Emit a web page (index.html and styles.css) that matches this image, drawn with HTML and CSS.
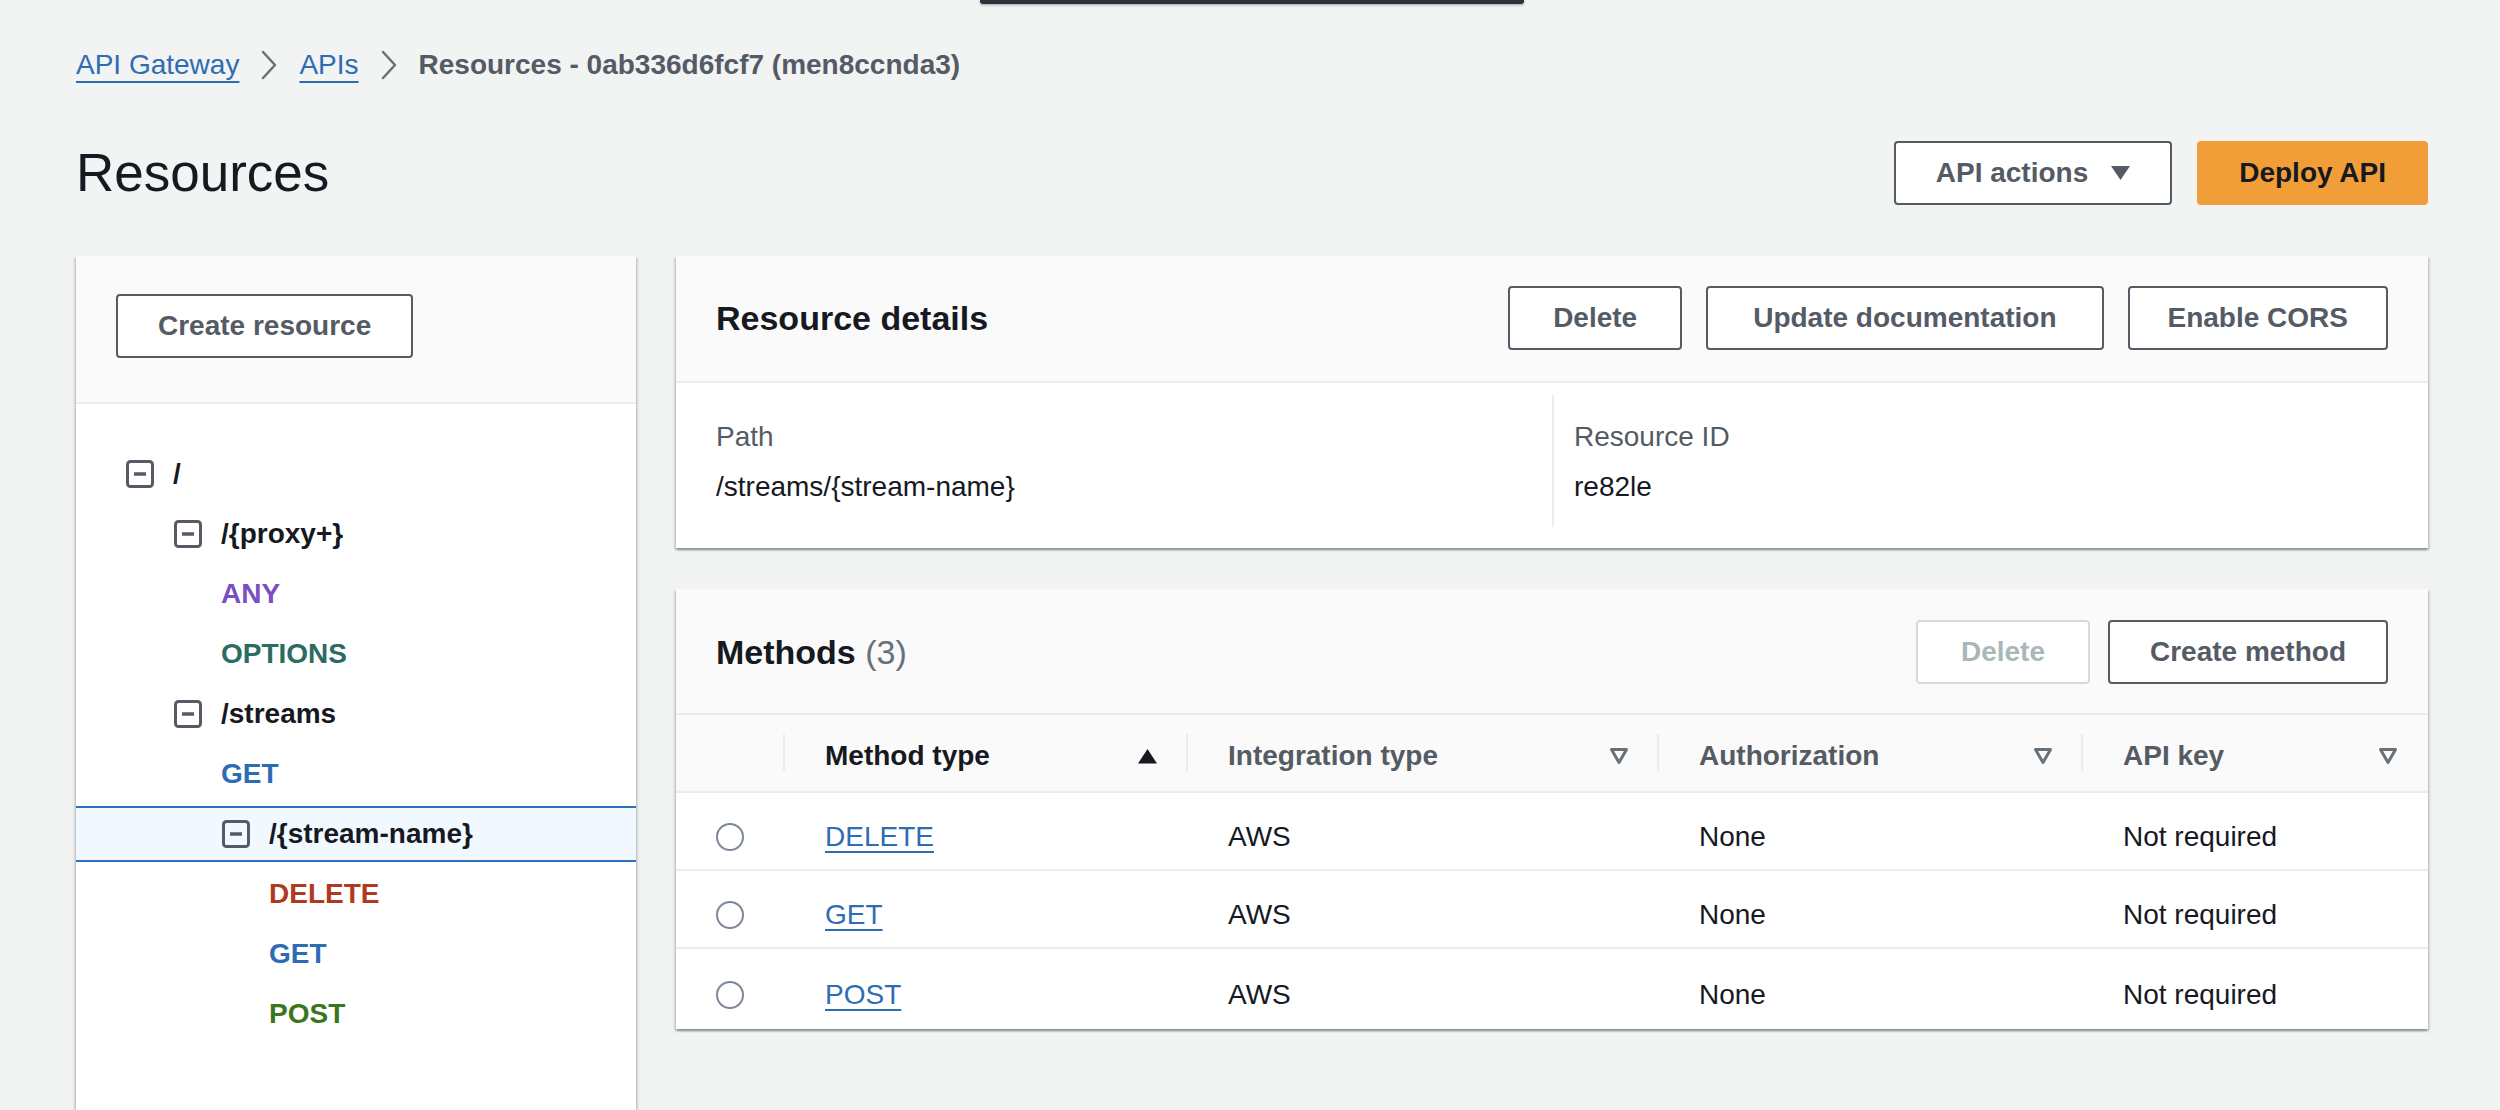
FILE: index.html
```html
<!DOCTYPE html>
<html lang="en">
<head>
<meta charset="utf-8">
<title>Resources - API Gateway</title>
<link rel="stylesheet" href="styles.css">
</head>
<body>
<div class="notch"></div>
<main class="page">
  <nav class="breadcrumb">
    <a class="crumb-link" href="#">API Gateway</a>
    <svg class="chev" viewBox="0 0 16 30"><path d="M2 2 L14 15 L2 28"/></svg>
    <a class="crumb-link" href="#">APIs</a>
    <svg class="chev" viewBox="0 0 16 30"><path d="M2 2 L14 15 L2 28"/></svg>
    <span class="crumb-current">Resources - 0ab336d6fcf7 (men8ccnda3)</span>
  </nav>

  <header class="page-header">
    <h1>Resources</h1>
    <div class="actions">
      <button class="btn">API actions <svg class="caret" viewBox="0 0 19 14"><polygon points="0,0 19,0 9.5,14"/></svg></button>
      <button class="btn btn-primary">Deploy API</button>
    </div>
  </header>

  <div class="layout">
    <aside class="panel">
      <div class="panel-header">
        <button class="btn">Create resource</button>
      </div>
      <ul class="tree">
        <li class="row r0"><svg class="tog" viewBox="0 0 28 28"><rect x="1.5" y="1.5" width="25" height="25" rx="3"/><line x1="8" y1="14" x2="20" y2="14"/></svg><span class="res">/</span></li>
        <li class="row r1"><svg class="tog" viewBox="0 0 28 28"><rect x="1.5" y="1.5" width="25" height="25" rx="3"/><line x1="8" y1="14" x2="20" y2="14"/></svg><span class="res">/{proxy+}</span></li>
        <li class="row m1"><span class="meth any">ANY</span></li>
        <li class="row m1"><span class="meth options">OPTIONS</span></li>
        <li class="row r1"><svg class="tog" viewBox="0 0 28 28"><rect x="1.5" y="1.5" width="25" height="25" rx="3"/><line x1="8" y1="14" x2="20" y2="14"/></svg><span class="res">/streams</span></li>
        <li class="row m1"><span class="meth get">GET</span></li>
        <li class="row r2 selected"><svg class="tog" viewBox="0 0 28 28"><rect x="1.5" y="1.5" width="25" height="25" rx="3"/><line x1="8" y1="14" x2="20" y2="14"/></svg><span class="res">/{stream-name}</span></li>
        <li class="row m2"><span class="meth delete">DELETE</span></li>
        <li class="row m2"><span class="meth get">GET</span></li>
        <li class="row m2"><span class="meth post">POST</span></li>
      </ul>
    </aside>

    <section class="content">
      <div class="card">
        <div class="card-header">
          <h2>Resource details</h2>
          <div class="btn-group">
            <button class="btn btn-wide-s">Delete</button>
            <button class="btn btn-wide-l">Update documentation</button>
            <button class="btn btn-tight">Enable CORS</button>
          </div>
        </div>
        <div class="details">
          <div class="col">
            <div class="label">Path</div>
            <div class="value">/streams/{stream-name}</div>
          </div>
          <div class="col col-border">
            <div class="label">Resource ID</div>
            <div class="value">re82le</div>
          </div>
        </div>
      </div>

      <div class="card">
        <div class="card-header methods-header">
          <h2>Methods <span class="count">(3)</span></h2>
          <div class="btn-group narrow">
            <button class="btn btn-disabled btn-wide-s">Delete</button>
            <button class="btn">Create method</button>
          </div>
        </div>
        <table class="methods">
          <colgroup>
            <col class="c0"><col class="c1"><col class="c2"><col class="c3"><col class="c4">
          </colgroup>
          <thead>
            <tr>
              <th class="sel-col"></th>
              <th class="sorted"><div class="th-inner"><span>Method type</span><svg class="sort" viewBox="0 0 21 16"><polygon points="10.5,1 20,15.5 1,15.5"/></svg></div></th>
              <th><div class="th-inner"><span>Integration type</span><svg class="filt" viewBox="0 0 20 18"><polygon points="2.5,2.5 17.5,2.5 10,15.5"/></svg></div></th>
              <th><div class="th-inner"><span>Authorization</span><svg class="filt" viewBox="0 0 20 18"><polygon points="2.5,2.5 17.5,2.5 10,15.5"/></svg></div></th>
              <th class="last"><div class="th-inner"><span>API key</span><svg class="filt" viewBox="0 0 20 18"><polygon points="2.5,2.5 17.5,2.5 10,15.5"/></svg></div></th>
            </tr>
          </thead>
          <tbody>
            <tr>
              <td class="sel-col"><span class="radio"></span></td>
              <td><a class="link" href="#">DELETE</a></td>
              <td>AWS</td>
              <td>None</td>
              <td>Not required</td>
            </tr>
            <tr>
              <td class="sel-col"><span class="radio"></span></td>
              <td><a class="link" href="#">GET</a></td>
              <td>AWS</td>
              <td>None</td>
              <td>Not required</td>
            </tr>
            <tr>
              <td class="sel-col"><span class="radio"></span></td>
              <td><a class="link" href="#">POST</a></td>
              <td>AWS</td>
              <td>None</td>
              <td>Not required</td>
            </tr>
          </tbody>
        </table>
      </div>
    </section>
  </div>
</main>
</body>
</html>
```

FILE: styles.css
```css
* { box-sizing: border-box; }

html, body {
  margin: 0;
  padding: 0;
}

body {
  position: relative;
  height: 1110px;
  overflow: hidden;
  background: #f2f3f3;
  color: #16191f;
  font-family: "Liberation Sans", Arial, sans-serif;
  font-size: 28px;
  line-height: 40px;
}

.notch {
  position: absolute;
  left: 980px;
  top: 0;
  width: 544px;
  height: 4px;
  background: #2b3139;
  border-radius: 0 0 3px 3px;
  box-shadow: 0 1px 3px rgba(0, 0, 0, 0.35);
}

.page {
  padding: 45px 72px 0 76px;
}

/* Breadcrumb */
.breadcrumb {
  display: flex;
  align-items: center;
  gap: 22px;
  height: 40px;
}

.crumb-link {
  color: #2d6db4;
  text-decoration: underline;
  text-decoration-thickness: 2px;
  text-underline-offset: 7px;
}

.chev {
  width: 16px;
  height: 30px;
  fill: none;
  stroke: #687078;
  stroke-width: 2.5;
  stroke-linecap: round;
  stroke-linejoin: round;
}

.crumb-current {
  font-weight: 700;
  color: #545b64;
}

/* Page header */
.page-header {
  display: flex;
  align-items: center;
  justify-content: space-between;
  height: 64px;
  margin-top: 56px;
}

h1 {
  margin: 0;
  font-size: 53px;
  font-weight: 400;
  line-height: 64px;
  color: #16191f;
}

.actions {
  display: flex;
  gap: 25px;
}

/* Buttons */
.btn {
  display: inline-flex;
  align-items: center;
  gap: 23px;
  height: 64px;
  padding: 0 40px;
  border: 2px solid #545b64;
  border-radius: 4px;
  background: #ffffff;
  color: #545b64;
  font-family: "Liberation Sans", Arial, sans-serif;
  font-size: 28px;
  font-weight: 700;
  line-height: 40px;
  white-space: nowrap;
}

.btn-wide-s { padding: 0 43px; }
.btn-wide-l { padding: 0 45px; }
.btn-tight { padding: 0 38px; }

.btn-primary {
  background: #f19e38;
  border-color: #f19e38;
  color: #16191f;
}

.btn-disabled {
  border-color: #d5dbdb;
  color: #aab7b8;
}

.caret {
  width: 19px;
  height: 14px;
  fill: #545b64;
}

/* Layout */
.layout {
  display: grid;
  grid-template-columns: 560px 1fr;
  gap: 40px;
  margin-top: 51px;
}

.panel,
.card {
  background: #ffffff;
  box-shadow: 0 2px 2px rgba(0, 28, 36, 0.3),
              2px 2px 2px rgba(0, 28, 36, 0.12),
              -2px 2px 2px rgba(0, 28, 36, 0.12);
}

.panel {
  height: 900px;
}

.panel-header {
  padding: 38px 40px 44px;
  background: #fafafa;
  border-bottom: 2px solid #eaeded;
}

/* Tree */
.tree {
  list-style: none;
  margin: 0;
  padding: 40px 0 0;
}

.row {
  display: flex;
  align-items: center;
  gap: 19px;
  height: 60px;
  font-weight: 700;
}

.r0 { padding-left: 50px; }
.r1 { padding-left: 98px; }
.r2 { padding-left: 146px; }
.m1 { padding-left: 145px; }
.m2 { padding-left: 193px; }

.row.selected {
  height: 56px;
  margin: 2px 0;
  background: #f1f8ff;
  border-top: 2px solid #2d73b9;
  border-bottom: 2px solid #2d73b9;
}

.tog {
  width: 28px;
  height: 28px;
  flex: none;
  fill: none;
  stroke: #545b64;
}

.tog rect { stroke-width: 3; }
.tog line { stroke-width: 3.5; }

.res { color: #16191f; }

.meth.any { color: #7b4fc2; }
.meth.options { color: #2c6b5f; }
.meth.get { color: #2d6bb2; }
.meth.delete { color: #b03a20; }
.meth.post { color: #3a7620; }

/* Content */
.content {
  display: flex;
  flex-direction: column;
  gap: 41px;
}

.card-header {
  display: flex;
  align-items: center;
  justify-content: space-between;
  padding: 30px 40px 31px;
  background: #fafafa;
  border-bottom: 2px solid #eaeded;
}

.methods-header {
  padding: 31px 40px 29px;
}

h2 {
  margin: 0;
  font-size: 34px;
  font-weight: 700;
  line-height: 44px;
  color: #16191f;
}

.count {
  font-weight: 400;
  color: #687078;
}

.btn-group {
  display: flex;
  gap: 24px;
}

.btn-group.narrow {
  gap: 18px;
}

/* Details */
.details {
  display: grid;
  grid-template-columns: 1fr 1fr;
  padding: 12px 40px 21px;
}

.col {
  padding: 22px 0 20px;
}

.col-border {
  border-left: 2px solid #eaeded;
  padding-left: 20px;
}

.label {
  color: #545b64;
  line-height: 40px;
}

.value {
  margin-top: 10px;
  line-height: 40px;
}

/* Methods table */
.methods {
  width: 100%;
  table-layout: fixed;
  border-collapse: separate;
  border-spacing: 0;
}

.c0 { width: 109px; }
.c1 { width: 403px; }
.c2 { width: 471px; }
.c3 { width: 424px; }

.methods thead tr { height: 78px; }

.methods th {
  position: relative;
  padding: 6px 30px 0 40px;
  background: #fafafa;
  border-bottom: 2px solid #eaeded;
  text-align: left;
  font-weight: 700;
  color: #545b64;
}

.methods th.sorted { color: #16191f; }

.methods th::after {
  content: "";
  position: absolute;
  right: 0;
  top: 19px;
  bottom: 20px;
  width: 2px;
  background: #eaeded;
}

.methods th.last::after { display: none; }

.th-inner {
  display: flex;
  align-items: center;
  justify-content: space-between;
}

.sort {
  width: 21px;
  height: 16px;
  fill: #16191f;
}

.filt {
  width: 20px;
  height: 18px;
  fill: none;
  stroke: #687078;
  stroke-width: 3;
  stroke-linejoin: round;
}

.methods tbody tr { height: 78px; }
.methods tbody tr:last-child { height: 80px; }

.methods td {
  padding: 12px 30px 0 40px;
  border-bottom: 2px solid #eaeded;
  vertical-align: middle;
}

.methods tbody tr:last-child td { border-bottom: none; }

.methods td.sel-col { padding: 12px 0 0 40px; }
.methods th.sel-col { padding: 0; }

.radio {
  display: block;
  width: 28px;
  height: 28px;
  border: 2px solid #7d8998;
  border-radius: 50%;
}

.link {
  color: #2d6db4;
  text-decoration: underline;
  text-decoration-thickness: 2px;
  text-underline-offset: 5px;
}
```
